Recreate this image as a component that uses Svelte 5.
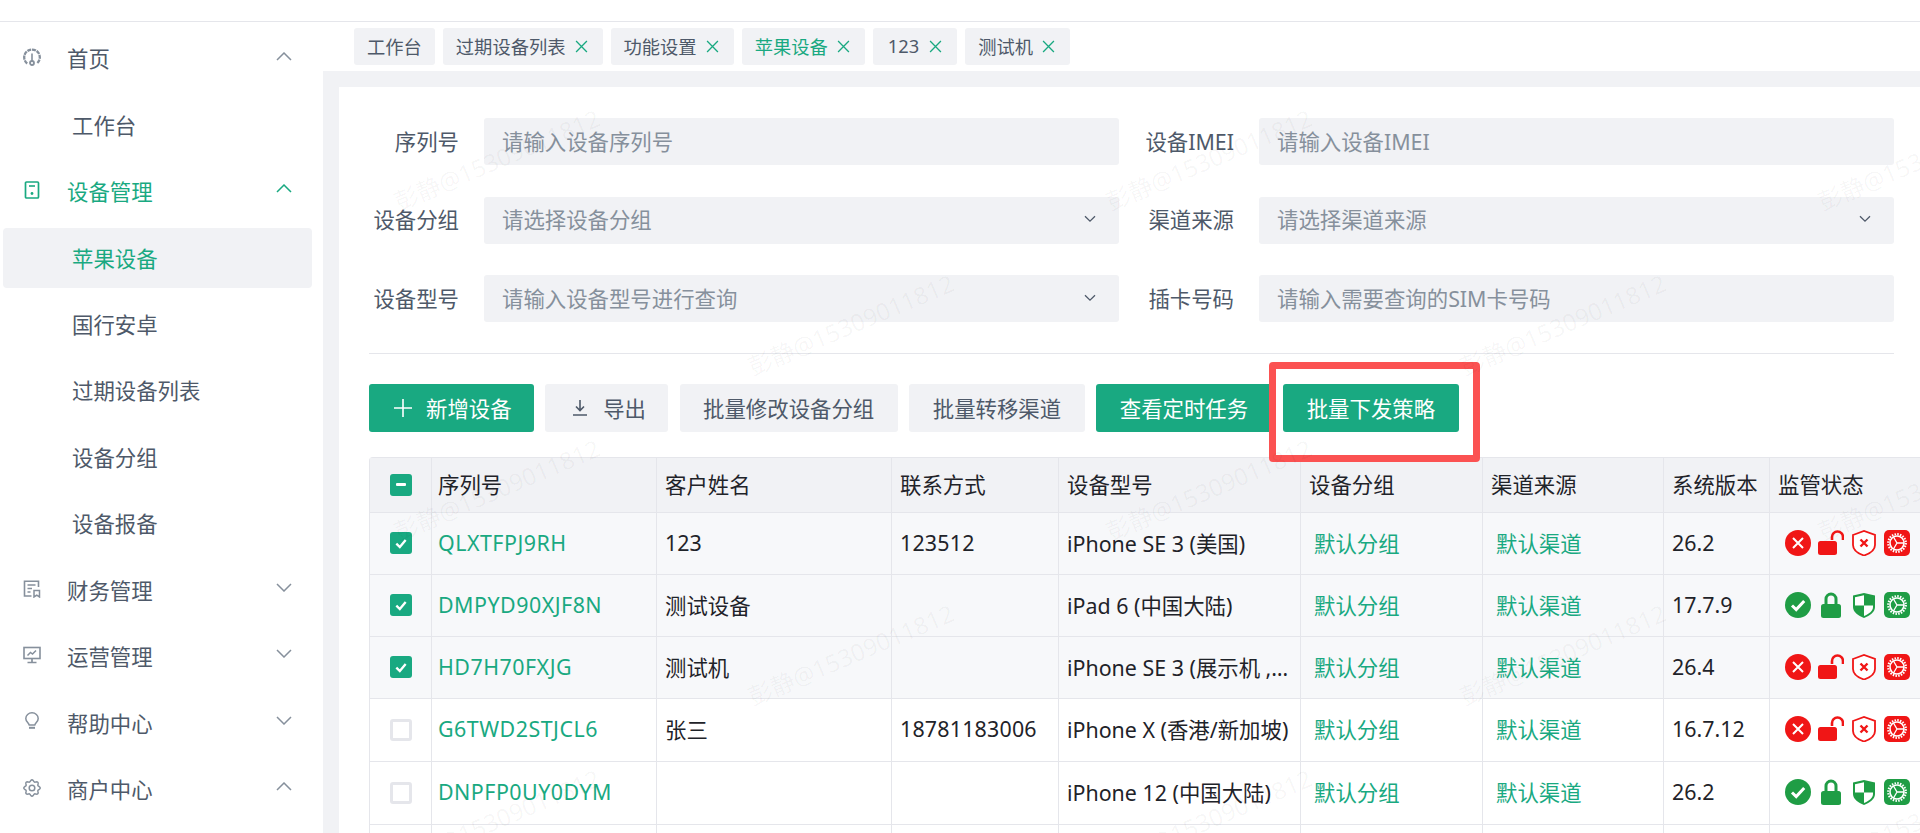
<script>
  const nav = [
    { label: '首页', icon: 'gauge', open: true },
    { label: '工作台', sub: true },
    { label: '设备管理', icon: 'device', open: true, green: true },
    { label: '苹果设备', sub: true, active: true },
    { label: '国行安卓', sub: true },
    { label: '过期设备列表', sub: true },
    { label: '设备分组', sub: true },
    { label: '设备报备', sub: true },
    { label: '财务管理', icon: 'finance', open: false },
    { label: '运营管理', icon: 'monitor', open: false },
    { label: '帮助中心', icon: 'bulb', open: false },
    { label: '商户中心', icon: 'gear', open: true }
  ];
  const tabs = [
    { label: '工作台', fixed: true },
    { label: '过期设备列表' },
    { label: '功能设置' },
    { label: '苹果设备', active: true },
    { label: '123', num: true },
    { label: '测试机' }
  ];
  const fields = [
    { label: '序列号', ph: '请输入设备序列号' },
    { label: '设备IMEI', ph: '请输入设备IMEI' },
    { label: '设备分组', ph: '请选择设备分组', select: true },
    { label: '渠道来源', ph: '请选择渠道来源', select: true },
    { label: '设备型号', ph: '请输入设备型号进行查询', select: true },
    { label: '插卡号码', ph: '请输入需要查询的SIM卡号码' }
  ];
  const cols = ['序列号', '客户姓名', '联系方式', '设备型号', '设备分组', '渠道来源', '系统版本', '监管状态'];
  const rows = [
    { sn: 'QLXTFPJ9RH', name: '123', phone: '123512', model: 'iPhone SE 3 (美国)', ver: '26.2', ok: false, sel: true },
    { sn: 'DMPYD90XJF8N', name: '测试设备', phone: '', model: 'iPad 6 (中国大陆)', ver: '17.7.9', ok: true, sel: true },
    { sn: 'HD7H70FXJG', name: '测试机', phone: '', model: 'iPhone SE 3 (展示机 , 中国大陆)', ver: '26.4', ok: false, sel: true },
    { sn: 'G6TWD2STJCL6', name: '张三', phone: '18781183006', model: 'iPhone X (香港/新加坡)', ver: '16.7.12', ok: false, sel: false },
    { sn: 'DNPFP0UY0DYM', name: '', phone: '', model: 'iPhone 12 (中国大陆)', ver: '26.2', ok: true, sel: false }
  ];
  const marks = [];
  for (let r = 0; r < 5; r++) {
    for (let c = 0; c < 3; c++) {
      const x = (r % 2 === 0 ? 400 : 754) + c * 712 - 339;
      const y = 190 + r * 165 - 87;
      marks.push({ x, y });
    }
  }
  // scalloped gear outline for the 商户中心 icon
  let gearPath = '';
  for (let i = 0; i <= 96; i++) {
    const a = (i / 96) * Math.PI * 2;
    const rad = 7.3 + 0.9 * Math.cos(8 * a);
    gearPath += (i ? 'L' : 'M') + (9 + rad * Math.cos(a)).toFixed(2) + ' ' + (9 + rad * Math.sin(a)).toFixed(2);
  }
  gearPath += 'z';
</script>

<div class="app">
  <div class="topbar"></div>
  <div class="body">
    <aside class="side">
      {#each nav as item}
        <div class="nav" class:sub={item.sub} class:active={item.active} class:green={item.green}>
          {#if item.icon}
            <svg class="nav-ico" viewBox="0 0 18 18" fill="none" stroke="currentColor" stroke-width="1.5">
              {#if item.icon === 'gauge'}
                <path d="M4.200 15.500A7.800 7.800 0 1 1 13.800 15.500" stroke-dasharray="4 0.800" stroke-width="2.300" />
                <circle cx="9" cy="15" r="2" stroke-width="1.800" />
                <path d="M9 5.500v7.500" stroke-width="1.600" />
              {:else if item.icon === 'device'}
                <rect x="2.500" y="1" width="13" height="16" rx="1" stroke-width="1.700" />
                <path d="M6 5h6" stroke-width="1.600" />
                <circle cx="9" cy="12.500" r="1.400" fill="currentColor" stroke="none" />
              {:else if item.icon === 'finance'}
                <path d="M15.500 7V1.200H1.500v14.800h7" stroke-width="1.600" />
                <path d="M4.500 5h8M4.500 8.500h4.500M4.500 12h3" />
                <path d="M11 10.500h5.500v6.500l-2.750-1.800-2.750 1.800z" />
              {:else if item.icon === 'monitor'}
                <rect x="1" y="1.500" width="16" height="11" stroke-width="1.600" />
                <path d="M9 12.500v4M4.500 16.500h9" stroke-width="1.700" />
                <path d="M4.500 9.500l3-3 2 1.500 3.500-3.500" />
              {:else if item.icon === 'bulb'}
                <path d="M6.200 13C5.600 10.600 2.800 9.800 2.800 6.400A6.200 5.600 0 0 1 15.200 6.400C15.200 9.800 12.400 10.600 11.800 13z" />
                <path d="M6 15.800h6" stroke-width="2" />
              {:else}
                <path d={gearPath} />
                <circle cx="9" cy="9" r="2.800" />
              {/if}
            </svg>
          {/if}
          <span class="nav-label">{item.label}</span>
          {#if item.icon}
            <svg class="chev" viewBox="0 0 16 9" fill="none" stroke="currentColor" stroke-width="1.500">
              <path d={item.open ? 'M1 8l7-7 7 7' : 'M1 1l7 7 7-7'} />
            </svg>
          {/if}
        </div>
      {/each}
    </aside>

    <main class="main">
      <div class="tabs">
        {#each tabs as t}
          <div class="tab" class:on={t.active} class:closable={!t.fixed} class:num={t.num}>
            <span class="tab-text">{t.label}</span>
            {#if !t.fixed}
              <svg class="x" viewBox="0 0 12 12" fill="none" stroke="currentColor" stroke-width="1.200">
                <path d="M1 1l10 10M11 1L1 11" />
              </svg>
            {/if}
          </div>
        {/each}
      </div>

      <div class="band">
        <section class="card">
          <div class="form">
            {#each fields as f}
              <div class="field">
                <span class="flabel">{f.label}</span>
                <div class="input">
                  <span class="ph">{f.ph}</span>
                  {#if f.select}
                    <svg class="caret" viewBox="0 0 12 8" fill="none" stroke="currentColor" stroke-width="1.300">
                      <path d="M1 1.200l5 5 5-5" />
                    </svg>
                  {/if}
                </div>
              </div>
            {/each}
          </div>

          <div class="divider"></div>

          <div class="actions">
            <button class="btn primary ico add">
              <svg viewBox="0 0 18 18" fill="none" stroke="currentColor" stroke-width="1.600"><path d="M9 0v18M0 9h18" /></svg>
              <span class="btn-text">新增设备</span>
            </button>
            <button class="btn ico">
              <svg viewBox="0 0 18 18" fill="none" stroke="currentColor" stroke-width="1.600"><path d="M9 1v10M5 7.500l4 4 4-4M2 16h14" /></svg>
              <span class="btn-text">导出</span>
            </button>
            <button class="btn"><span class="btn-text">批量修改设备分组</span></button>
            <button class="btn"><span class="btn-text">批量转移渠道</span></button>
            <button class="btn primary"><span class="btn-text">查看定时任务</span></button>
            <button class="btn primary"><span class="btn-text">批量下发策略</span></button>
          </div>

          <div class="table-wrap">
            <table>
              <colgroup>
                <col style="width:62px" />
                <col style="width:225px" />
                <col style="width:235px" />
                <col style="width:167px" />
                <col style="width:242px" />
                <col style="width:182px" />
                <col style="width:181px" />
                <col style="width:106px" />
                <col style="width:160px" />
              </colgroup>
              <thead>
                <tr>
                  <th class="chk"><span class="box on"><i class="minus"></i></span></th>
                  {#each cols as c, i}<th class:first={i === 0}>{c}</th>{/each}
                </tr>
              </thead>
              <tbody>
                {#each rows as r, i}
                  <tr class:sel={r.sel} class:tall={i >= 3}>
                    <td class="chk">
                      {#if r.sel}
                        <span class="box on">
                          <svg viewBox="0 0 12 12" fill="none" stroke="#fff" stroke-width="2"><path d="M2 6.500l3 3 5-6" /></svg>
                        </span>
                      {:else}
                        <span class="box"></span>
                      {/if}
                    </td>
                    <td class="link first sn">{r.sn}</td>
                    <td>{r.name}</td>
                    <td class="phone">{r.phone}</td>
                    <td class="clip">{r.model}</td>
                    <td class="link tag">默认分组</td>
                    <td class="link tag">默认渠道</td>
                    <td>{r.ver}</td>
                    <td class="status">
                      <div class="icons" class:good={r.ok}>
                        {#if r.ok}
                          <svg viewBox="0 0 26 26"><circle cx="13" cy="13" r="13" fill="currentColor" /><path d="M7 13.500l4.200 4 8-8.500" fill="none" stroke="#fff" stroke-width="3" /></svg>
                          <svg viewBox="0 0 26 26"><path d="M8 12V7a5 5 0 0 1 10 0v5" fill="none" stroke="currentColor" stroke-width="3" /><rect x="3" y="12" width="20" height="14" rx="2.500" fill="currentColor" /></svg>
                          <svg viewBox="0 0 26 26"><path d="M2 3.500L13 1l11 2.500V15c0 5-5 8.500-11 11C7 23.500 2 20 2 15z" fill="currentColor" /><path d="M13 3.200L4 5.200V13.500H13zM13 13.500H22V15C22 19 18 22 13 24z" fill="#fff" /></svg>
                        {:else}
                          <svg viewBox="0 0 26 26"><circle cx="13" cy="13" r="13" fill="currentColor" /><path d="M8 8l10 10M18 8L8 18" fill="none" stroke="#fff" stroke-width="2" /></svg>
                          <svg viewBox="0 0 26 26"><path d="M14 10V7a5.500 5.500 0 0 1 11 0v3" fill="none" stroke="currentColor" stroke-width="2.600" /><rect x="0" y="11" width="19" height="14" rx="2.500" fill="currentColor" /></svg>
                          <svg viewBox="0 0 26 26"><path d="M2 5l11-4 11 4v10c0 5-5 8.500-11 10.500C7 23.500 2 20 2 15z" fill="#fff" stroke="currentColor" stroke-width="1.800" /><path d="M9.500 9.500l7 7M16.500 9.500l-7 7" fill="none" stroke="currentColor" stroke-width="2.400" /></svg>
                        {/if}
                        <svg viewBox="0 0 26 26">
                          <rect width="26" height="26" rx="5" fill="currentColor" />
                          <circle cx="13" cy="13" r="7" fill="none" stroke="#fff" stroke-width="1.600" />
                          <circle cx="13" cy="13" r="8.800" fill="none" stroke="#fff" stroke-width="2.200" stroke-dasharray="1.500 1.264" />
                          <path d="M20 13H13L9.500 7M13 13L9.500 19" fill="none" stroke="#fff" stroke-width="1.300" />
                        </svg>
                      </div>
                    </td>
                  </tr>
                {/each}
                <tr><td class="chk"></td><td></td><td></td><td></td><td></td><td></td><td></td><td></td><td></td></tr>
              </tbody>
            </table>
          </div>

          <div class="redbox"></div>

          {#each marks as m}
            <span class="mark" style="left:{m.x}px;top:{m.y}px">彭静@15309011812</span>
          {/each}
        </section>
      </div>
    </main>
  </div>
</div>

<style>
  :global(body) {
    margin: 0;
    background: #fff;
  }
  .app {
    width: 1920px;
    height: 833px;
    overflow: hidden;
    font-family: "Noto Sans", "Noto Sans CJK SC", sans-serif;
    font-size: 21.400px;
    color: #1f2329;
    display: flex;
    flex-direction: column;
  }
  .topbar {
    height: 21px;
    flex: none;
    border-bottom: 1px solid #e5e6eb;
  }
  .body {
    flex: 1;
    min-height: 0;
    display: flex;
  }
  .side {
    width: 323px;
    flex: none;
    padding: 7px 11px 0 3px;
    box-sizing: border-box;
  }
  .nav {
    height: 60px;
    margin-bottom: 6.450px;
    display: flex;
    align-items: center;
    color: #4e5969;
    padding-left: 20px;
    border-radius: 4px;
  }
  .nav.sub {
    padding-left: 69px;
  }
  .nav.green,
  .nav.active {
    color: #19a981;
  }
  .nav.active {
    background: #f1f2f5;
  }
  .nav-ico {
    width: 18px;
    height: 18px;
    flex: none;
    margin-right: 26px;
    color: #86909c;
    position: relative;
    top: -2px;
  }
  .nav.green .nav-ico {
    color: #19a981;
  }
  .nav-label {
    flex: 1;
    line-height: 1;
  }
  .chev {
    width: 16px;
    height: 9px;
    flex: none;
    margin-right: 20px;
    color: #86909c;
    position: relative;
    top: -3px;
  }
  .nav.green .chev {
    color: #19a981;
  }
  .main {
    flex: 1;
    min-width: 0;
    display: flex;
    flex-direction: column;
    background: #f1f2f5;
  }
  .tabs {
    height: 49px;
    flex: none;
    background: #fff;
    display: flex;
    align-items: flex-start;
    gap: 8px;
    padding: 6px 0 0 31px;
    box-sizing: border-box;
  }
  .tab {
    height: 37px;
    padding: 0 13px;
    display: flex;
    align-items: center;
    gap: 9px;
    background: #f1f2f5;
    border-radius: 3px;
    font-size: 18.300px;
    color: #4e5969;
  }
  .tab-text {
    padding-bottom: 2px;
  }
  .tab.closable {
    padding-right: 15px;
  }
  .tab.num {
    padding: 0 15px;
    gap: 10px;
  }
  .tab.on {
    color: #19a981;
  }
  .x {
    width: 13px;
    height: 13px;
    color: #19a981;
  }
  .band {
    flex: 1;
    min-height: 0;
    padding: 16px 0 0 16px;
  }
  .card {
    position: relative;
    height: 100%;
    background: #fff;
    padding: 31px 26px 0 30px;
    box-sizing: border-box;
    overflow: hidden;
  }
  .form {
    display: grid;
    grid-template-columns: 750px 750px;
    column-gap: 25px;
    row-gap: 31.500px;
  }
  .field {
    display: flex;
    align-items: center;
  }
  .flabel {
    width: 90px;
    margin-right: 25px;
    text-align: right;
    white-space: nowrap;
    color: #4e5969;
    padding-bottom: 3px;
  }
  .input {
    flex: 1;
    height: 47px;
    background: #f1f2f5;
    border-radius: 3px;
    display: flex;
    align-items: center;
    justify-content: space-between;
    padding: 0 23px 0 18px;
    color: #86909c;
  }
  .ph {
    padding-bottom: 3px;
  }
  .caret {
    width: 12px;
    height: 8px;
    color: #4e5969;
    position: relative;
    top: -1px;
  }
  .divider {
    height: 1px;
    background: #e5e6eb;
    margin: 31px 0 30px;
  }
  .actions {
    display: flex;
    gap: 11.600px;
    margin-bottom: 25px;
  }
  .btn {
    height: 48px;
    padding: 0 23.500px;
    border: 0;
    border-radius: 3px;
    background: #f1f2f5;
    color: #4e5969;
    font: inherit;
    display: flex;
    align-items: center;
    gap: 14px;
  }
  .btn-text {
    padding-bottom: 2px;
  }
  .btn.ico {
    padding: 0 22px 0 26px;
  }
  .btn.add {
    padding: 0 22px 0 25px;
  }
  .btn svg {
    width: 18px;
    height: 18px;
  }
  .btn.primary {
    background: #19a981;
    color: #fff;
  }
  .table-wrap {
    margin-right: -30px;
  }
  table {
    width: 1560px;
    table-layout: fixed;
    border-collapse: separate;
    border-spacing: 0;
    border-top: 1px solid #e5e6eb;
    border-left: 1px solid #e5e6eb;
    border-top-left-radius: 4px;
  }
  th,
  td {
    height: 62px;
    box-sizing: border-box;
    padding: 0 8px 3px;
    text-align: left;
    font-weight: 400;
    border-right: 1px solid #e5e6eb;
    border-bottom: 1px solid #e5e6eb;
    white-space: nowrap;
    overflow: hidden;
    text-overflow: ellipsis;
  }
  th {
    height: 55px;
    padding-bottom: 4px;
    background: #f1f2f5;
  }
  tr.tall td {
    height: 63px;
  }
  th.first,
  td.first {
    padding-left: 6px;
  }
  td.sn {
    letter-spacing: 0.500px;
  }
  td.phone {
    letter-spacing: 0.200px;
  }
  tr.sel td {
    background: #f7f8fa;
  }
  td.chk,
  th.chk {
    text-align: center;
    padding: 0 0 1px;
    line-height: 0;
  }
  .box {
    display: inline-flex;
    align-items: center;
    justify-content: center;
    width: 22px;
    height: 22px;
    box-sizing: border-box;
    border: 3px solid #e5e6eb;
    border-radius: 3px;
    vertical-align: middle;
  }
  .box.on {
    background: #19a981;
    border: 0;
  }
  .box svg {
    width: 14px;
    height: 14px;
  }
  .minus {
    width: 10px;
    height: 3px;
    background: #fff;
    border-radius: 1px;
  }
  .link {
    color: #19a981;
  }
  .tag {
    padding-left: 13px;
  }
  .status {
    padding: 0 0 2px 15px;
    overflow: visible;
  }
  .icons {
    display: flex;
    gap: 7px;
    color: #f01616;
  }
  .icons.good {
    color: #1f9d45;
  }
  .icons svg {
    width: 26px;
    height: 26px;
    flex: none;
  }
  .redbox {
    position: absolute;
    left: 930px;
    top: 275px;
    width: 211px;
    height: 100px;
    box-sizing: border-box;
    border: 7px solid #fb5252;
    border-radius: 4px;
  }
  .mark {
    position: absolute;
    font-size: 24px;
    line-height: 1;
    color: rgba(0, 0, 0, 0.04);
    white-space: nowrap;
    transform: rotate(-23deg);
    transform-origin: 0 100%;
    pointer-events: none;
  }
</style>
